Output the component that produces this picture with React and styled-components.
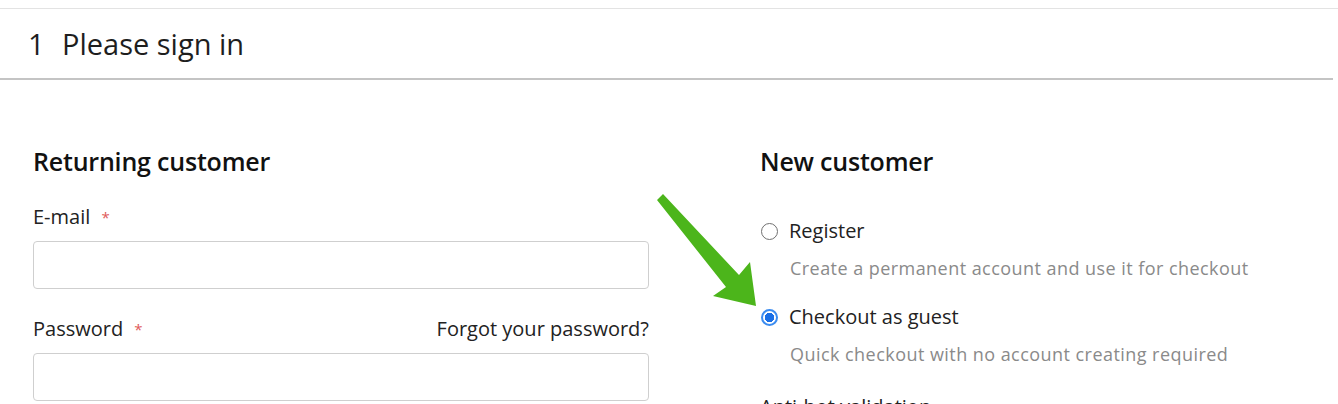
import React from 'react';
import styled, { createGlobalStyle } from 'styled-components';

const Global = createGlobalStyle`
  body {
    margin: 0;
    background: #fff;
    font-family: "Open Sans", Lato, sans-serif;
    color: #222;
  }
`;

function App() {
  return (
    <Page>
      <Global />
      <Step>
        <StepHead>
          <StepNum>1</StepNum>
          <StepTitle>Please sign in</StepTitle>
        </StepHead>
      </Step>

      <Columns>
        <Column>
          <Title>Returning customer</Title>
          <Field>
            <LabelRow>
              <Label>E-mail <Req>*</Req></Label>
            </LabelRow>
            <Input type="email" />
          </Field>
          <Field>
            <LabelRow>
              <Label>Password <Req>*</Req></Label>
              <Forgot href="#">Forgot your password?</Forgot>
            </LabelRow>
            <Input type="password" />
          </Field>
        </Column>

        <Column>
          <Title gap="43px">New customer</Title>
          <Option>
            <Radio />
            <OptionLabel>Register</OptionLabel>
          </Option>
          <Hint>Create a permanent account and use it for checkout</Hint>
          <Option>
            <Radio checked />
            <OptionLabel>Checkout as guest</OptionLabel>
          </Option>
          <Hint>Quick checkout with no account creating required</Hint>
          <Option top="4px">
            <OptionLabel>Anti-bot validation</OptionLabel>
          </Option>
        </Column>
      </Columns>

      <Arrow width="110" height="120" viewBox="0 0 110 120">
        <polygon
          points="2,8 8,2 84,83 95,70 101,114 58,104 71,95"
          fill="#4cb51b"
        />
      </Arrow>
    </Page>
  );
}

export default App;

const Page = styled.div`
  position: relative;
  height: 404px;
  overflow: hidden;
`;

const Step = styled.div`
  margin-top: 8px;
  border-top: 1px solid #e3e3e3;
`;

const StepHead = styled.div`
  height: 69px;
  margin-right: 5px;
  border-bottom: 2px solid #c4c4c4;
  display: flex;
  align-items: center;
  padding-left: 28px;
  font-size: 29px;
  color: #1e1e1e;
`;

const StepNum = styled.span`
  width: 34px;
`;

const StepTitle = styled.span``;

const Columns = styled.div`
  display: grid;
  grid-template-columns: 616px 1fr;
  column-gap: 111px;
  padding: 66px 33px 0;
`;

const Column = styled.div`
  display: flex;
  flex-direction: column;
`;

const Title = styled.h2`
  margin: 0 0 ${p => p.gap || '29px'};
  font-size: 25px;
  line-height: 30px;
  font-weight: 600;
  color: #111;
  letter-spacing: -0.2px;
`;

const Field = styled.div`
  display: flex;
  flex-direction: column;
  margin-bottom: 28px;
`;

const LabelRow = styled.div`
  display: flex;
  justify-content: space-between;
  margin-bottom: 12px;
`;

const Label = styled.label`
  font-size: 20px;
  line-height: 24px;
  color: #222;
`;

const Req = styled.span`
  color: #e05a5a;
  font-size: 15px;
  margin-left: 6px;
  vertical-align: top;
`;

const Forgot = styled.a`
  font-size: 20px;
  line-height: 24px;
  color: #222;
  text-decoration: none;
`;

const Input = styled.input`
  box-sizing: border-box;
  height: 48px;
  width: 100%;
  border: 1px solid #cfcfcf;
  border-radius: 4px;
  outline: none;
  font: inherit;
`;

const Option = styled.div`
  display: flex;
  align-items: center;
  gap: 11px;
  margin: ${p => p.top || '0'} 0 13px;
`;

const Radio = styled.span`
  box-sizing: border-box;
  width: 17px;
  height: 17px;
  margin-left: 1px;
  border-radius: 50%;
  border: ${p => (p.checked ? '2px solid #3b8cf0' : '1px solid #707070')};
  background: ${p => (p.checked ? 'radial-gradient(circle, #1a6fe6 0 4.5px, #fff 5px)' : '#fff')};
`;

const OptionLabel = styled.span`
  font-size: 20px;
  line-height: 24px;
  color: #222;
`;

const Hint = styled.div`
  margin: 0 0 25px 30px;
  font-size: 18px;
  line-height: 24px;
  letter-spacing: 0.45px;
  color: #8a8a8a;
`;

const Arrow = styled.svg`
  position: absolute;
  left: 655px;
  top: 192px;
`;
